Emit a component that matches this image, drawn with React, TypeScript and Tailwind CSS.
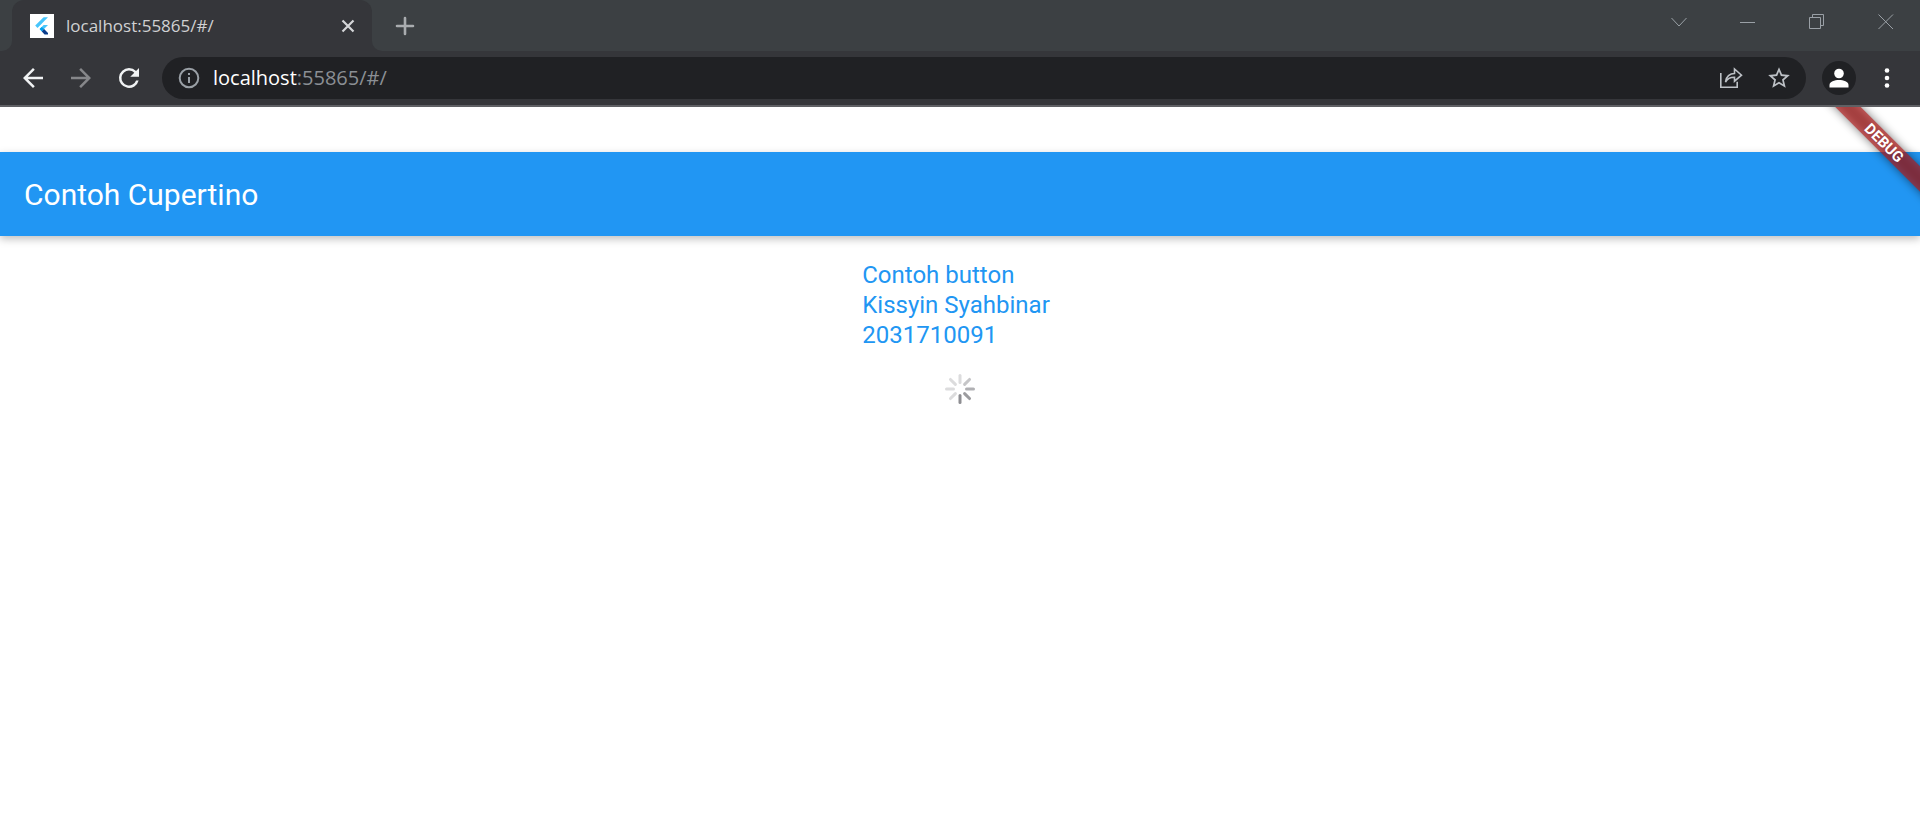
import React from "react";

type ControlProps = { label: string; className?: string; children: React.ReactNode };

function IconButton({ label, className = "", children }: ControlProps) {
  return (
    <button type="button" aria-label={label} className={`flex shrink-0 items-center justify-center ${className}`}>
      {children}
    </button>
  );
}

function FlutterLogo() {
  return (
    <svg viewBox="0 0 24 24" className="size-6 shrink-0" aria-hidden="true">
      <rect width="24" height="24" fill="#fff" />
      <path d="M18 3.2 13.6 3.2 5.2 11.6 7.5 13.9Z" fill="#47c5fb" />
      <path d="M18 11H13.6L9.6 15.1 11.8 17.3Z" fill="#47c5fb" />
      <path d="M9.6 15.1 11.8 12.9 14.1 15.1 11.8 17.4Z" fill="#00a0ee" />
      <path d="M11.8 17.4 14.1 15.1 18 19V20.6H14.6Z" fill="#0b3d8c" />
    </svg>
  );
}

function TabStrip() {
  return (
    <header className="flex h-[51px] bg-[#3c4043] text-[#9aa0a6]">
      <div className="w-3 bg-[#35363a]">
        <div className="h-full rounded-br-[10px] bg-[#3c4043]" />
      </div>
      <div className="w-[360px] shrink-0 bg-[#3c4043]">
        <div className="flex h-full items-center rounded-t-[12px] bg-[#35363a] pr-3 pl-[18px]">
          <FlutterLogo />
          <span className="ml-3 flex-1 text-[17px] leading-6 text-[#d0d1d3]">localhost:55865/#/</span>
          <IconButton label="Close tab" className="size-6 text-[#d5d6d8]">
            <svg viewBox="0 0 24 24" className="size-6" fill="none" stroke="currentColor" strokeWidth="2.2">
              <path d="M6.5 6.5l11 11M17.5 6.5l-11 11" />
            </svg>
          </IconButton>
        </div>
      </div>
      <div className="w-3 bg-[#35363a]">
        <div className="h-full rounded-bl-[10px] bg-[#3c4043]" />
      </div>
      <IconButton label="New tab" className="w-[42px] text-[#a9acaf]">
        <svg viewBox="0 0 24 24" className="size-6" fill="none" stroke="currentColor" strokeWidth="2.6" strokeLinecap="round">
          <path d="M4 12h16M12 4v16" />
        </svg>
      </IconButton>
      <div className="ml-auto flex h-[43px]">
        <IconButton label="Search tabs" className="w-[69px]">
          <svg viewBox="0 0 16 16" className="size-4" fill="none" stroke="currentColor" strokeWidth="1">
            <path d="M.5 4l7.500 8 7.500-8" />
          </svg>
        </IconButton>
        <IconButton label="Minimize" className="w-[69px]">
          <svg viewBox="0 0 16 16" className="size-4" fill="none" stroke="currentColor" strokeWidth="1">
            <path d="M0 8.5h15" />
          </svg>
        </IconButton>
        <IconButton label="Restore" className="w-[69px]">
          <svg viewBox="0 0 16 16" className="size-4" fill="none" stroke="currentColor" strokeWidth="1">
            <path d="M.5 3.5h11v11H.5zM3.5 3.5v-3h11v11h-3" />
          </svg>
        </IconButton>
        <IconButton label="Close window" className="w-[69px]">
          <svg viewBox="0 0 16 16" className="size-4" fill="none" stroke="currentColor" strokeWidth="1">
            <path d="M.5 .5l14.500 14.500M15 .5l-14.500 14.500" />
          </svg>
        </IconButton>
      </div>
    </header>
  );
}

function Toolbar() {
  return (
    <nav className="flex h-14 items-center border-b-2 border-[#5f6064] bg-[#35363a] pr-[18px] pl-[9px]">
      <IconButton label="Back" className="size-12 text-[#f1f3f4]">
        <svg viewBox="0 0 24 24" className="size-[30px]" fill="currentColor">
          <path d="M20 11H7.83l5.59-5.59L12 4l-8 8 8 8 1.41-1.41L7.83 13H20v-2z" />
        </svg>
      </IconButton>
      <IconButton label="Forward" className="size-12 text-[#86878a]">
        <svg viewBox="0 0 24 24" className="size-[30px]" fill="currentColor">
          <path d="M12 4l-1.41 1.41L16.17 11H4v2h12.17l-5.58 5.59L12 20l8-8z" />
        </svg>
      </IconButton>
      <IconButton label="Reload" className="size-12 text-[#f1f3f4]">
        <svg viewBox="0 0 24 24" className="size-[30px]" fill="currentColor">
          <path d="M17.65 6.35A7.96 7.96 0 0 0 12 4a8 8 0 1 0 7.73 10h-2.08A6 6 0 1 1 12 6c1.66 0 3.14.69 4.22 1.78L13 11h7V4l-2.35 2.35z" />
        </svg>
      </IconButton>
      <div className="ml-[9px] flex h-[42px] flex-1 items-center rounded-full bg-[#202124] px-[15px]">
        <svg viewBox="0 0 24 24" className="size-6 shrink-0" fill="none" stroke="#9aa0a6" strokeWidth="2" aria-hidden="true">
          <circle cx="12" cy="12" r="9.3" />
          <path d="M12 11v6M12 7v2" />
        </svg>
        <span className="ml-3 flex-1 text-[20px] leading-6 text-[#8b8f94]">
          <span className="text-white">localhost</span>:55865/#/
        </span>
        <IconButton label="Share this page" className="size-6 text-[#bdc1c6]">
          <svg viewBox="0 0 24 24" className="size-6" fill="none" stroke="currentColor" strokeWidth="1.6">
            <path d="M1.8 7v14.2h16.4v-5.5" />
            <path d="M6.5 16C7 10.500 11 7.500 15.500 7.500V3L22.500 9.200l-7 6V11.300C11.500 11.200 8.500 12.500 6.500 16Z" />
          </svg>
        </IconButton>
        <IconButton label="Bookmark this tab" className="ml-6 size-6 text-[#bdc1c6]">
          <svg viewBox="0 0 24 24" className="size-[26px] shrink-0" fill="currentColor">
            <path d="M22 9.240l-7.190-.62L12 2 9.190 8.630 2 9.240l5.460 4.730L5.820 21 12 17.270 18.180 21l-1.630-7.030L22 9.240zM12 15.400l-3.760 2.270 1-4.280-3.320-2.880 4.380-.38L12 6.100l1.710 4.040 4.380.38-3.320 2.880 1 4.280L12 15.400z" />
          </svg>
        </IconButton>
      </div>
      <IconButton label="Profile" className="ml-4 size-[34px] rounded-full bg-[#202124] text-white">
        <svg viewBox="0 0 20 20" className="size-5" fill="currentColor">
          <circle cx="10" cy="5.500" r="4.800" />
          <path d="M.5 19.500v-2.500c0-3.200 5-5 9.500-5s9.500 1.800 9.500 5v2.500z" />
        </svg>
      </IconButton>
      <IconButton label="Customize and control" className="ml-4 size-[30px] text-white">
        <svg viewBox="0 0 24 24" className="size-6" fill="currentColor">
          <circle cx="12" cy="4.500" r="2.300" />
          <circle cx="12" cy="12" r="2.300" />
          <circle cx="12" cy="19.500" r="2.300" />
        </svg>
      </IconButton>
    </nav>
  );
}

function DebugBanner() {
  return (
    <div className="pointer-events-none absolute top-0 right-0 size-[120px] overflow-hidden">
      <div className="absolute top-[27px] -right-[84px] h-[18px] w-[240px] rotate-45">
        <div className="absolute inset-0 bg-black/50 blur-[5px]" />
        <div className="relative bg-[#b71c1c]/65 text-center text-[15px] leading-[18px] font-bold text-white">DEBUG</div>
      </div>
    </div>
  );
}

const spokes = [
  { angle: 0, color: "#dcdcdd" },
  { angle: 45, color: "#c6c6c8" },
  { angle: 90, color: "#b0b0b3" },
  { angle: 135, color: "#9c9c9f" },
  { angle: 180, color: "#8e8e92" },
  { angle: 225, color: "#dcdcdd" },
  { angle: 270, color: "#dcdcdd" },
  { angle: 315, color: "#dcdcdd" },
];

function ActivityIndicator() {
  return (
    <svg viewBox="-15 -15 30 30" className="size-[30px]" role="img" aria-label="Loading">
      {spokes.map((s) => (
        <rect key={s.angle} x="-1.500" y="-15" width="3" height="10" rx="1.500" fill={s.color} transform={`rotate(${s.angle})`} />
      ))}
    </svg>
  );
}

export default function App() {
  return (
    <div className="flex min-h-screen flex-col bg-white font-['Open_Sans','Noto_Sans',sans-serif]">
      <TabStrip />
      <Toolbar />
      <div className="relative flex flex-1 flex-col pt-[45px] font-[Roboto,sans-serif]">
        <div className="flex h-[84px] items-center bg-[#2196f3] px-6 pt-0.5 shadow-[0_3px_8px_rgba(0,0,0,0.25)]">
          <h1 className="text-[30px] leading-9 text-white">Contoh Cupertino</h1>
        </div>
        <main className="flex flex-col items-center pt-6">
          <button type="button" className="pr-2 text-left text-2xl leading-[30px] text-[#2196f3]">
            Contoh button
            <br />
            Kissyin Syahbinar
            <br />
            2031710091
          </button>
          <div className="mt-6">
            <ActivityIndicator />
          </div>
        </main>
        <DebugBanner />
      </div>
    </div>
  );
}
